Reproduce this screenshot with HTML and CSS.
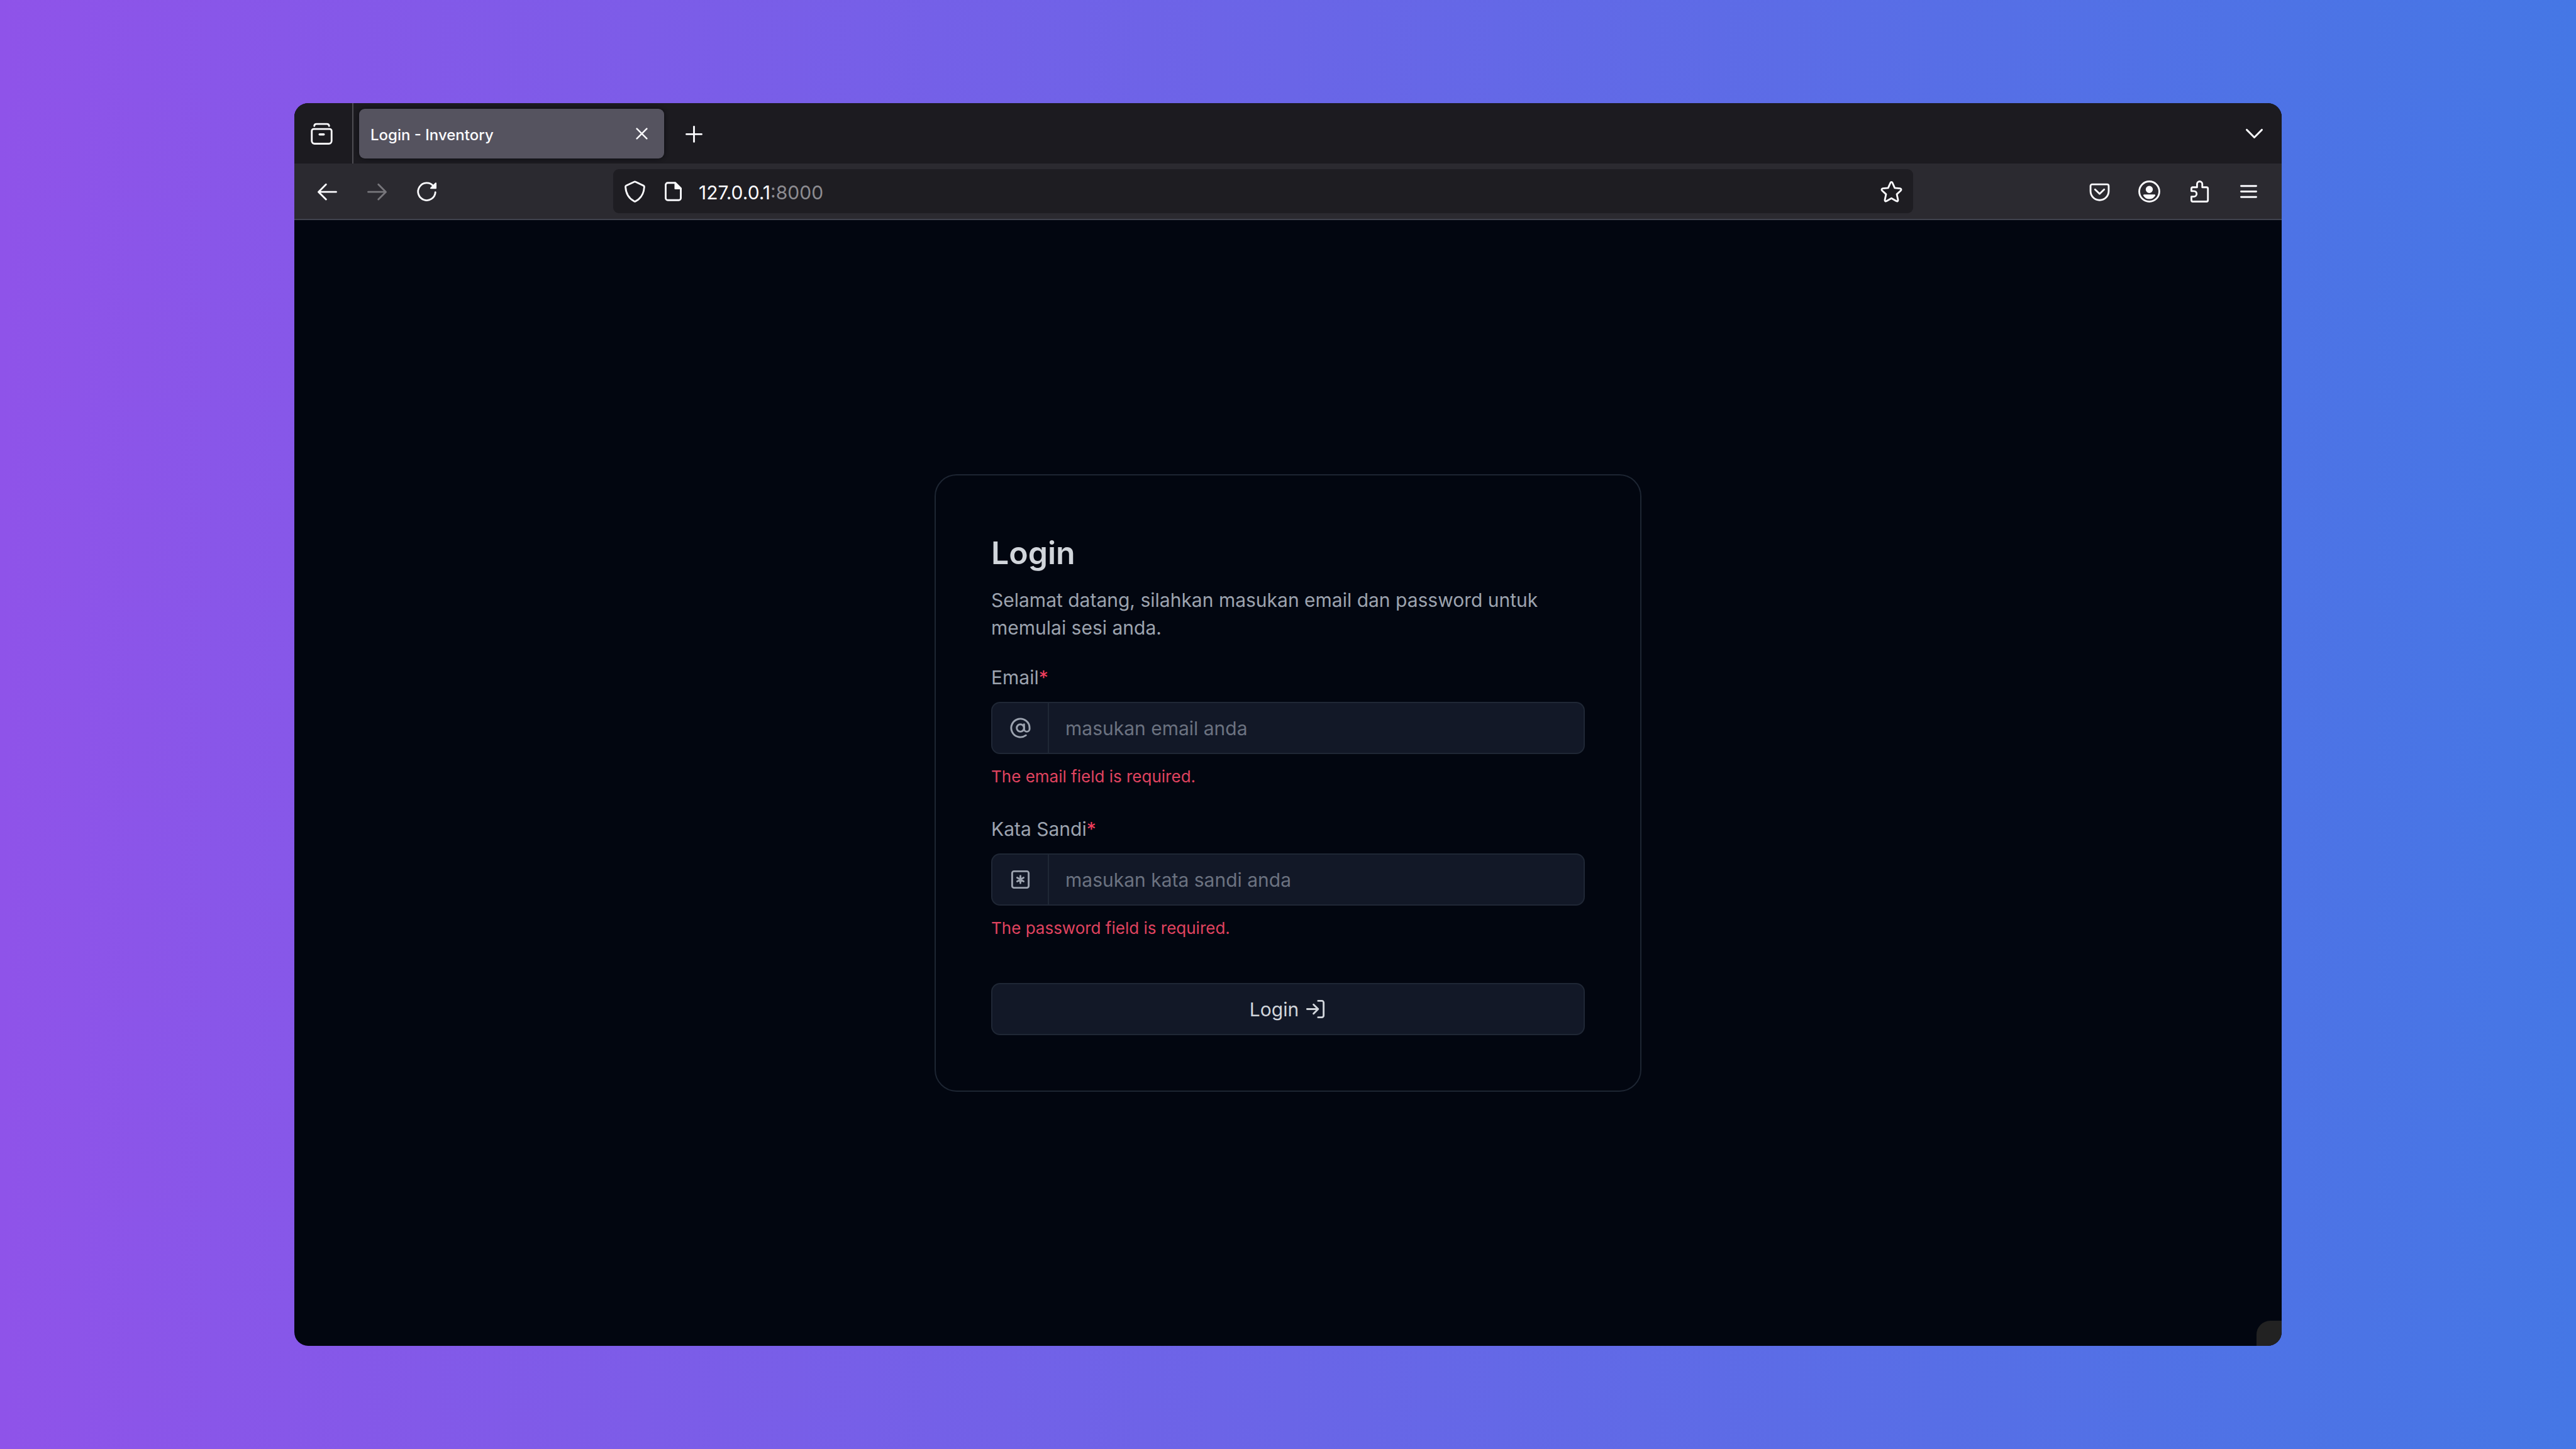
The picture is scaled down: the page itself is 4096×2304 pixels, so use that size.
FILE: index.html
```html
<!DOCTYPE html>
<html lang="id">
<head>
<meta charset="utf-8">
<title>Login - Inventory</title>
<meta name="viewport" content="width=device-width, initial-scale=1">
<link rel="stylesheet" href="styles.css">
</head>
<body>
<div class="browser">
  <header class="tabstrip">
    <button class="view-button" type="button" aria-label="View">
      <svg class="glyph" viewBox="0 0 16 16"><path d="M2.6 2.4A1.6 1.6 0 0 1 4.2 1h7.6a1.6 1.6 0 0 1 1.6 1.4"/><path d="M2.2 4.600h11.600a1.400 1.400 0 0 1 1.400 1.400v7.300a2 2 0 0 1-2 2H2.800a2 2 0 0 1-2-2V6a1.400 1.400 0 0 1 1.400-1.400z"/><path d="M6.500 8.600h3" stroke-width="1.600"/></svg>
    </button>
    <div class="tab">
      <span class="tab-title">Login - Inventory</span>
      <button class="tab-close" type="button" aria-label="Close tab">
        <svg class="glyph" viewBox="0 0 16 16"><path d="M4.400 4.400l7.200 7.200M11.600 4.400l-7.200 7.200"/></svg>
      </button>
    </div>
    <button class="tab-new" type="button" aria-label="New tab">
      <svg class="glyph" viewBox="0 0 16 16"><path d="M8 2.900v11M2.500 8.400h11"/></svg>
    </button>
    <button class="tab-list" type="button" aria-label="List all tabs">
      <svg class="glyph" viewBox="0 0 16 16"><path d="M2.500 5.200L8 10.700l5.500-5.500"/></svg>
    </button>
  </header>

  <nav class="toolbar" aria-label="Navigation">
    <div class="tools">
      <button class="tool" type="button" aria-label="Back">
        <svg class="glyph" viewBox="0 0 16 16"><path d="M14.400 8.300H1.800M7 2.900L1.600 8.300 7 13.700"/></svg>
      </button>
      <button class="tool tool-off" type="button" aria-label="Forward">
        <svg class="glyph" viewBox="0 0 16 16"><path d="M1.600 8.300h12.600M9 2.900l5.400 5.400L9 13.700"/></svg>
      </button>
      <button class="tool" type="button" aria-label="Reload">
        <svg class="glyph" viewBox="0 0 16 16"><path d="M14.300 8.500A6.300 6.300 0 1 1 12.800 4"/><path class="solid" d="M14.600 2V5.600h-3.600z"/></svg>
      </button>
    </div>
    <div class="urlbar">
      <button class="url-button" type="button" aria-label="Protection">
        <svg class="glyph" viewBox="0 0 16 16"><path d="M8.300.9L14.200 3.700c.4.200.7.600.6 1.100-.3 4.700-2.500 8.300-6.300 10.300a1 1 0 0 1-1 0C3.700 13.100 1.500 9.500 1.200 4.800c-.1-.5.200-.9.600-1.100L7.700.9a.7.700 0 0 1 .6 0z"/></svg>
      </button>
      <button class="url-button" type="button" aria-label="Site information">
        <svg class="glyph" viewBox="0 0 16 16"><path d="M4 1.700h5.500l4 4v7.100a1.500 1.500 0 0 1-1.500 1.500H4a1.500 1.500 0 0 1-1.500-1.500V3.200A1.500 1.500 0 0 1 4 1.700z"/><path class="solid" d="M9.400 1.700v4.200h4.200z"/></svg>
      </button>
      <div class="url" role="textbox" aria-label="Address">127.0.0.1<span class="url-port">:8000</span></div>
      <button class="url-button" type="button" aria-label="Bookmark">
        <svg class="glyph" viewBox="0 0 16 16"><path d="M7.300 1.600c.3-.7 1.100-.7 1.400 0l1.700 3.800 3.900.4c.8.100 1.100.9.5 1.500l-2.900 2.700.9 4.100c.1.800-.5 1.200-1.200.9L8 12.900 4.400 15c-.7.300-1.300-.1-1.200-.9l.9-4.100-2.900-2.700c-.6-.6-.3-1.400.5-1.500l3.900-.4z"/></svg>
      </button>
    </div>
    <div class="tools">
      <button class="tool" type="button" aria-label="Pocket">
        <svg class="glyph" viewBox="0 0 16 16"><path d="M2.600 2.800h10.800a1.200 1.200 0 0 1 1.200 1.200v3.700a6.600 6.600 0 0 1-13.200 0V4a1.200 1.200 0 0 1 1.200-1.200z"/><path d="M4.700 6.500L8 9.700l3.300-3.200"/></svg>
      </button>
      <button class="tool" type="button" aria-label="Account">
        <svg class="glyph" viewBox="0 0 16 16"><circle cx="8" cy="8" r="7.300"/><circle class="solid" cx="8" cy="6.500" r="2.100"/><path class="solid" d="M4.100 10.700h7.800C11 12.300 9.600 13 8 13s-3-.7-3.900-2.300z"/></svg>
      </button>
      <button class="tool" type="button" aria-label="Extensions">
        <svg class="glyph" viewBox="0 0 16 16"><path d="M3.500 4.900h3.100V2.600a1.900 1.900 0 0 1 3.800 0v2.300h3.100a1 1 0 0 1 1 1v8.400a1 1 0 0 1-1 1h-10a1 1 0 0 1-1-1v-2.600h1.800a2 2 0 0 0 0-4H2.500V5.900a1 1 0 0 1 1-1z"/></svg>
      </button>
      <button class="tool" type="button" aria-label="Menu">
        <svg class="glyph" viewBox="0 0 16 16"><path d="M2.500 4h11M2.500 8h11M2.500 12h11"/></svg>
      </button>
    </div>
  </nav>

  <main class="page">
    <form class="card" novalidate>
      <h1 class="title">Login</h1>
      <p class="intro">Selamat datang, silahkan masukan email dan password untuk memulai sesi anda.</p>

      <div class="field">
        <label class="label" for="email">Email<span class="required">*</span></label>
        <div class="control">
          <span class="addon">
            <svg class="icon" viewBox="0 0 24 24"><circle cx="12" cy="12" r="4"/><path d="M16 8v5a3 3 0 0 0 6 0v-1a10 10 0 1 0-4 8"/></svg>
          </span>
          <input class="input" id="email" type="email" placeholder="masukan email anda">
        </div>
        <p class="error">The email field is required.</p>
      </div>

      <div class="field">
        <label class="label" for="password">Kata Sandi<span class="required">*</span></label>
        <div class="control">
          <span class="addon">
            <svg class="icon" viewBox="0 0 24 24"><rect x="3" y="3" width="18" height="18" rx="2"/><path d="M12 8v8M8.500 14l7-4M8.500 10l7 4"/></svg>
          </span>
          <input class="input" id="password" type="password" placeholder="masukan kata sandi anda">
        </div>
        <p class="error">The password field is required.</p>
      </div>

      <button class="submit" type="submit">Login
        <svg class="icon" viewBox="0 0 24 24"><path d="M15 3h4a2 2 0 0 1 2 2v14a2 2 0 0 1-2 2h-4M10 17l5-5-5-5M15 12H3"/></svg>
      </button>
    </form>
  </main>
  <div class="corner"></div>
</div>
</body>
</html>
```

FILE: styles.css
```css
*, *::before, *::after { box-sizing: border-box; }

body {
  margin: 0;
  min-height: 100vh;
  padding: 164px 468px;
  display: flex;
  background: linear-gradient(90deg, #8f53e9, #4577e5);
  font-family: Inter, "Liberation Sans", sans-serif;
  color: #d1d5db;
}

button, input { font: inherit; color: inherit; }

button {
  display: flex;
  align-items: center;
  justify-content: center;
  padding: 0;
  border: 0;
  background: none;
}

.browser {
  position: relative;
  flex: 1;
  display: flex;
  flex-direction: column;
  overflow: hidden;
  border-radius: 22px;
  background: #020610;
}

.glyph {
  width: 35px;
  height: 35px;
  fill: none;
  stroke: currentColor;
  stroke-width: 1.3;
  stroke-linecap: round;
  stroke-linejoin: round;
}

.solid { fill: currentColor; stroke-width: 1; }

/* Tab strip */
.tabstrip {
  display: flex;
  align-items: stretch;
  height: 96px;
  background: #1c1b20;
  color: #fbfbfe;
}

.view-button {
  width: 94px;
  padding-right: 5px;
  border-right: 2px solid #4d4c52;
}

.tab {
  display: flex;
  align-items: center;
  justify-content: space-between;
  width: 485px;
  margin: 9px 0 8px 9px;
  padding: 0 18px;
  border-radius: 9px;
  background: #55535f;
  box-shadow: 0 0 6px #0c0c10;
}

.tab-title {
  padding-top: 4px;
  font-size: 24px;
  line-height: 36px;
  font-weight: 500;
}

.tab-close .glyph { stroke-width: 1.1; }

.tab-new { width: 79px; margin-left: 8px; }

.tab-list { width: 79px; margin-left: auto; margin-right: 4px; }

/* Navigation bar */
.toolbar {
  display: flex;
  justify-content: space-between;
  gap: 257px;
  height: 90px;
  padding: 0 13px;
  border-bottom: 2px solid #40424d;
  background: #2b2a30;
  color: #fbfbfe;
}

.tools { display: flex; }

.tool { width: 79px; }

.tool-off { color: #77767b; }

.urlbar {
  flex: 1;
  display: flex;
  align-items: center;
  margin: 9px 0;
  padding: 0 4px;
  border-radius: 9px;
  background: #1e1d22;
}

.url-button { width: 61px; height: 61px; }

.url {
  flex: 1;
  padding: 4px 0 0 10px;
  font-size: 30px;
  line-height: 44px;
}

.url-port { color: #8d8c91; }

/* Page */
.page {
  flex: 1;
  display: flex;
  align-items: center;
  justify-content: center;
}

.card {
  display: flex;
  flex-direction: column;
  width: 1124px;
  padding: 88px;
  border: 2px solid #1d2532;
  border-radius: 35px;
}

.title {
  margin: 0;
  font-size: 50px;
  line-height: 70px;
  font-weight: 600;
}

.intro {
  margin: 18px 0 35px;
  font-size: 30px;
  line-height: 44px;
  color: #9ca3af;
}

.field {
  display: flex;
  flex-direction: column;
  margin-bottom: 44px;
}

.label {
  margin-bottom: 17px;
  font-size: 30px;
  line-height: 44px;
  color: #9ca3af;
}

.required { color: #f43f5e; }

.control {
  display: flex;
  height: 83px;
  border: 2px solid #1f2735;
  border-radius: 14px;
  background: #121827;
}

.addon {
  display: flex;
  align-items: center;
  justify-content: center;
  width: 90px;
  border-right: 2px solid #1f2735;
  color: #9ca3af;
}

.icon {
  width: 35px;
  height: 35px;
  fill: none;
  stroke: currentColor;
  stroke-width: 2;
  stroke-linecap: round;
  stroke-linejoin: round;
}

.input {
  flex: 1;
  min-width: 0;
  padding: 0 26px;
  border: 0;
  outline: 0;
  background: none;
  font-size: 30px;
}

.input::placeholder { color: #6b7280; opacity: 1; }

.error {
  margin: 18px 0 0;
  font-size: 26px;
  line-height: 35px;
  color: #e0435f;
}

.submit {
  gap: 9px;
  height: 83px;
  margin-top: 26px;
  border: 2px solid #1f2735;
  border-radius: 14px;
  background: #121827;
  font-size: 30px;
}

/* Status panel stub in the window corner */
.corner {
  position: absolute;
  right: 0;
  bottom: 0;
  width: 40px;
  height: 40px;
  border-top-left-radius: 22px;
  background: #222222;
}
```
